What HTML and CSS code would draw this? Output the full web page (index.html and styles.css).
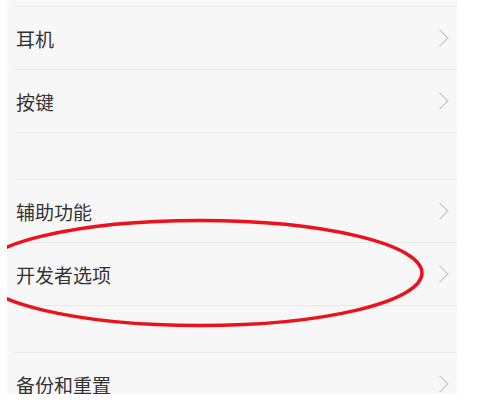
FILE: index.html
```html
<!DOCTYPE html>
<html lang="zh-CN">

<head>
  <meta charset="UTF-8">
  <meta name="viewport" content="width=device-width, initial-scale=1.0">
  <title>设置</title>
  <link rel="stylesheet" href="styles.css">
</head>

<body>
  <div class="panel">
    <ul class="list">
      <li class="row">耳机<span class="arrow"></span></li>
      <li class="row">按键<span class="arrow"></span></li>
      <li class="gap"></li>
      <li class="row">辅助功能<span class="arrow"></span></li>
      <li class="row">开发者选项<span class="arrow"></span></li>
      <li class="gap"></li>
      <li class="row">备份和重置<span class="arrow"></span>
        <svg class="paw" width="30" height="24" viewBox="0 0 30 24">
          <g fill="#fff" stroke="#d8d8d8" stroke-width="1">
            <ellipse cx="8" cy="14" rx="3" ry="3.5" />
            <ellipse cx="13" cy="8" rx="3" ry="4" />
            <ellipse cx="19" cy="8" rx="3" ry="4" />
            <ellipse cx="24" cy="14" rx="3" ry="3.5" />
            <path d="M9 23 C10 16 22 16 23 23 Z" />
          </g>
        </svg>
      </li>
    </ul>
    <!-- 红色圈 -->
    <svg class="mark" width="450" height="394" viewBox="0 0 450 394">
      <ellipse cx="193" cy="273" rx="222" ry="52.5" fill="none" stroke="#ec111b" stroke-width="3.5" />
    </svg>
  </div>
</body>

</html>
```

FILE: styles.css
```css
/* 全局 */
body {
  margin: 0;
  background-color: #fff;
  font-family: "Noto Sans CJK SC", "Noto Sans", sans-serif;
}

/* 设置面板 */
.panel {
  position: relative;
  margin-left: 7px;
  width: 450px;
  height: 394px;
  background-color: #f7f7f7;
  overflow: hidden;
}

.list {
  list-style: none;
  margin: 0;
  padding: 6px 0 0 8px;
}

.row {
  position: relative;
  display: flex;
  align-items: center;
  justify-content: space-between;
  height: 63px;
  padding: 0 9px 0 1px;
  box-sizing: border-box;
  border-top: 1px solid #e8e8e8;
  font-size: 19px;
  color: #333;
}

.gap {
  height: 47px;
  border-top: 1px solid #e8e8e8;
  box-sizing: border-box;
}

/* 右箭头 */
.arrow {
  width: 11px;
  height: 11px;
  border-top: 1.2px solid #c2c2c2;
  border-right: 1.2px solid #c2c2c2;
  transform: rotate(45deg);
  margin-right: 2px;
}

.paw {
  position: absolute;
  right: 25px;
  bottom: 0;
}

.mark {
  position: absolute;
  left: 0;
  top: 0;
}
```
